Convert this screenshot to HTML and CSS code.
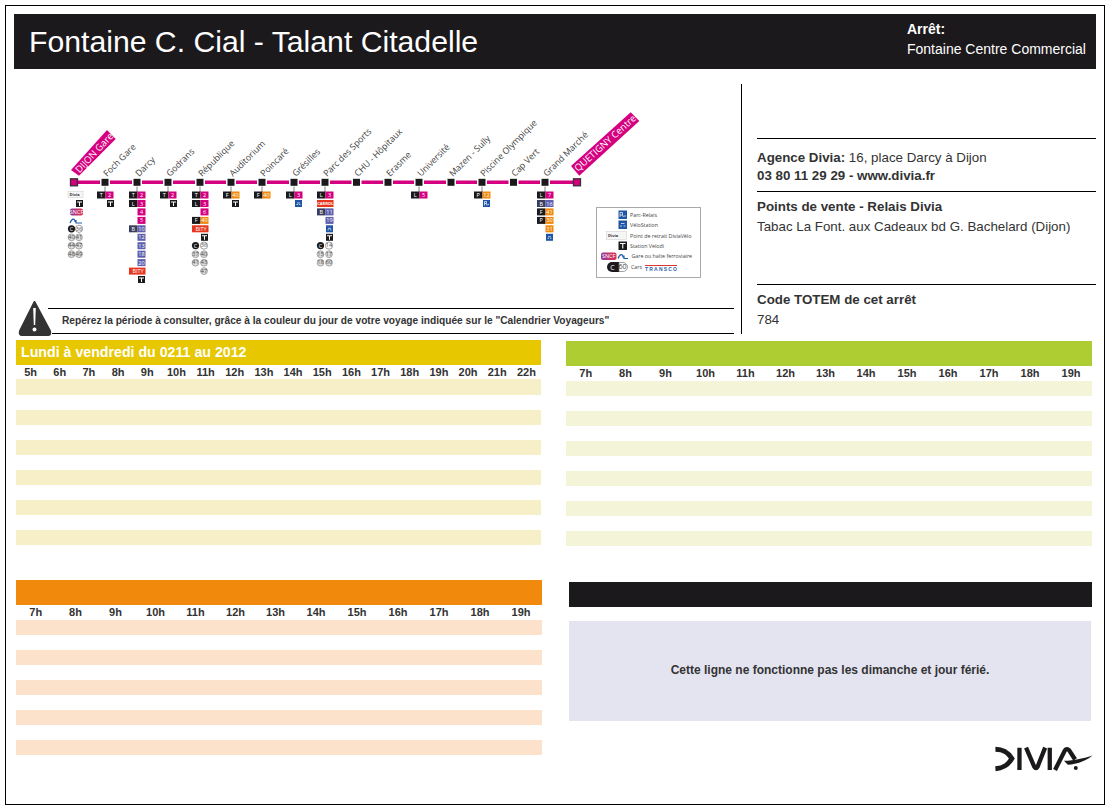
FILE: index.html
```html
<!DOCTYPE html>
<html lang="fr">
<head>
    <meta charset="UTF-8">
    <title>Fontaine C. Cial - Talant Citadelle</title>
    <link rel="stylesheet" href="styles.css">
</head>
<body>
<div class="page">
    <div class="header">
        <h1>Fontaine C. Cial - Talant Citadelle</h1>
        <div class="stop">
            <strong>Arrêt:</strong>
            <span>Fontaine Centre Commercial</span>
        </div>
    </div>

    <div class="top">
        <div class="plan">
            <!-- viewBox is in page coordinates -->
            <svg class="line" viewBox="14 84 727 215" width="727" height="215">
                <defs>
                    <linearGradient id="sncf-fill" x1="0" y1="0" x2="1" y2="0">
                        <stop offset="0" stop-color="#8d3a9c"/>
                        <stop offset="1" stop-color="#e5304f"/>
                    </linearGradient>
                    <g id="node"><rect class="node" x="-4.25" y="178.05" width="8.5" height="8.5"/><path class="tick" d="M0 186.5V192"/></g>
                    <g id="velodi"><rect class="k" width="7" height="7"/><path class="w" d="M1 1.5H6V2.5H4V6H3V2.5H1Z"/></g>
                    <g id="velo"><rect class="c" width="7" height="7"/><path class="thin" d="M1.5 4.5H3M4 4.5H5.5M2 3H5"/></g>
                    <g id="rplus"><rect class="c" width="7" height="7"/><path class="thin" d="M1.5 5.5V1.5H3.5V3.5H1.5M3 3.5L4 5.5M4.5 4.5H6"/></g>
                </defs>

                <path class="track" d="M74 182.3H577"/>
                <use href="#node" x="105"/><use href="#node" x="137"/><use href="#node" x="168"/><use href="#node" x="200"/>
                <use href="#node" x="231"/><use href="#node" x="262"/><use href="#node" x="294"/><use href="#node" x="325"/>
                <use href="#node" x="419"/><use href="#node" x="482"/><use href="#node" x="545"/>
                <rect class="node" x="352.25" y="178.05" width="8.5" height="8.5"/>
                <rect class="node" x="383.75" y="178.05" width="8.5" height="8.5"/>
                <rect class="node" x="446.75" y="178.05" width="8.5" height="8.5"/>
                <rect class="node" x="509.25" y="178.05" width="8.5" height="8.5"/>
                <rect class="end" x="70.5" y="178.8" width="7" height="7"/>
                <rect class="end" x="573.5" y="178.8" width="7" height="7"/>

                <polygon class="flag" points="71,170 107,130 115.7,139 79,175.7"/>
                <text class="flag-text" transform="translate(79.5 173.5) rotate(-47)">DIJON Gare</text>
                <polygon class="flag" points="571,166 630.7,112.3 639.3,121 579.3,175.7"/>
                <text class="flag-text" transform="translate(578 172) rotate(-42)">QUETIGNY Centre</text>

                <text class="name" transform="translate(107 177) rotate(-45)">Foch Gare</text>
                <text class="name" transform="translate(139 177) rotate(-45)">Darcy</text>
                <text class="name" transform="translate(170 177) rotate(-45)">Godrans</text>
                <text class="name" transform="translate(202 177) rotate(-45)">République</text>
                <text class="name" transform="translate(233 177) rotate(-45)">Auditorium</text>
                <text class="name" transform="translate(264 177) rotate(-45)">Poincaré</text>
                <text class="name" transform="translate(296 177) rotate(-45)">Grésilles</text>
                <text class="name" transform="translate(327 177) rotate(-45)">Parc des Sports</text>
                <text class="name" transform="translate(358 177) rotate(-45)">CHU - Hôpitaux</text>
                <text class="name" transform="translate(390 177) rotate(-45)">Erasme</text>
                <text class="name" transform="translate(421 177) rotate(-45)">Université</text>
                <text class="name" transform="translate(453 177) rotate(-45)">Mazen - Sully</text>
                <text class="name" transform="translate(484 177) rotate(-45)">Piscine Olympique</text>
                <text class="name" transform="translate(515 177) rotate(-45)">Cap Vert</text>
                <text class="name" transform="translate(547 177) rotate(-45)">Grand Marché</text>

                <!-- Dijon Gare -->
                <g transform="translate(74 0)">
                    <rect class="pale" x="-6" y="191.5" width="15" height="6"/>
                    <text class="tiny" x="-4.5" y="196">Divia</text>
                    <use href="#velodi" x="2" y="200"/>
                    <rect class="sncf" x="-4" y="208.4" width="13" height="7" rx="2"/>
                    <text class="num" x="2.5" y="213.8">SNCF</text>
                    <path class="ter" d="M-4 223C-2 218 1 218 1 222M2 220V223H8"/>
                    <circle class="k" cx="-2.5" cy="228.8" r="3.6"/><text class="num" x="-2.5" y="230.8">C</text>
                    <circle class="ring" cx="5" cy="228.8" r="3.6"/><text class="num dark" x="5" y="230.6">36</text>
                    <circle class="gray" cx="-2.5" cy="237.3" r="3.4"/><text class="num dark" x="-2.5" y="239">40</text>
                    <circle class="gray" cx="5" cy="237.3" r="3.4"/><text class="num dark" x="5" y="239">41</text>
                    <circle class="gray" cx="-2.5" cy="245.7" r="3.4"/><text class="num dark" x="-2.5" y="247.4">44</text>
                    <circle class="gray" cx="5" cy="245.7" r="3.4"/><text class="num dark" x="5" y="247.4">47</text>
                    <circle class="gray" cx="-2.5" cy="254.2" r="3.4"/><text class="num dark" x="-2.5" y="255.9">48</text>
                    <circle class="gray" cx="5" cy="254.2" r="3.4"/><text class="num dark" x="5" y="255.9">49</text>
                </g>

                <!-- Foch Gare -->
                <g transform="translate(105 0)">
                    <rect class="k" x="-8" y="191.5" width="8.5" height="7"/><text class="num" x="-3.8" y="197">T</text>
                    <rect class="m" x="0.5" y="191.5" width="8" height="7"/><text class="num" x="4.5" y="197">2</text>
                    <use href="#velodi" x="2" y="200"/>
                </g>

                <!-- Darcy -->
                <g transform="translate(137 0)">
                    <rect class="k" x="-8" y="191.5" width="8.5" height="7"/><text class="num" x="-3.8" y="197">T</text>
                    <rect class="m" x="0.5" y="191.5" width="8" height="7"/><text class="num" x="4.5" y="197">2</text>
                    <rect class="k" x="-8" y="200" width="8.5" height="7"/><text class="num" x="-3.8" y="205.5">L</text>
                    <rect class="m" x="0.5" y="200" width="8" height="7"/><text class="num" x="4.5" y="205.5">3</text>
                    <rect class="m" x="0.5" y="208.4" width="8" height="7"/><text class="num" x="4.5" y="213.9">4</text>
                    <rect class="m" x="0.5" y="216.9" width="8" height="7"/><text class="num" x="4.5" y="222.4">5</text>
                    <rect class="n" x="-8" y="225.3" width="8.5" height="7"/><text class="num" x="-3.8" y="230.8">B</text>
                    <rect class="b" x="0.5" y="225.3" width="8" height="7"/><text class="num" x="4.5" y="230.8">10</text>
                    <rect class="b" x="0.5" y="233.8" width="8" height="7"/><text class="num" x="4.5" y="239.3">12</text>
                    <rect class="b" x="0.5" y="242.2" width="8" height="7"/><text class="num" x="4.5" y="247.7">13</text>
                    <rect class="b" x="0.5" y="250.7" width="8" height="7"/><text class="num" x="4.5" y="256.2">18</text>
                    <rect class="b" x="0.5" y="259.1" width="8" height="7"/><text class="num" x="4.5" y="264.6">20</text>
                    <rect class="r" x="-8" y="267.6" width="16.5" height="7"/><text class="num" x="1" y="273.1">BITY</text>
                    <use href="#velodi" x="1" y="276"/>
                </g>

                <!-- Godrans -->
                <g transform="translate(168 0)">
                    <rect class="k" x="-8" y="191.5" width="8.5" height="7"/><text class="num" x="-3.8" y="197">T</text>
                    <rect class="m" x="0.5" y="191.5" width="8" height="7"/><text class="num" x="4.5" y="197">2</text>
                    <use href="#velodi" x="2" y="200"/>
                </g>

                <!-- Republique -->
                <g transform="translate(200 0)">
                    <rect class="k" x="-8" y="191.5" width="8.5" height="7"/><text class="num" x="-3.8" y="197">T</text>
                    <rect class="m" x="0.5" y="191.5" width="8" height="7"/><text class="num" x="4.5" y="197">2</text>
                    <rect class="k" x="-8" y="200" width="8.5" height="7"/><text class="num" x="-3.8" y="205.5">L</text>
                    <rect class="m" x="0.5" y="200" width="8" height="7"/><text class="num" x="4.5" y="205.5">3</text>
                    <rect class="m" x="0.5" y="208.4" width="8" height="7"/><text class="num" x="4.5" y="213.9">6</text>
                    <rect class="k" x="-8" y="216.9" width="8.5" height="7"/><text class="num" x="-3.8" y="222.4">F</text>
                    <rect class="o" x="0.5" y="216.9" width="8" height="7"/><text class="num" x="4.5" y="222.4">40</text>
                    <rect class="r" x="-8" y="225.3" width="16.5" height="7"/><text class="num" x="1" y="230.8">BITY</text>
                    <use href="#velodi" x="1" y="233.8"/>
                    <circle class="k" cx="-4.5" cy="245.6" r="3.6"/><text class="num" x="-4.5" y="247.6">C</text>
                    <circle class="ring" cx="4" cy="245.6" r="3.6"/><text class="num dark" x="4" y="247.4">36</text>
                    <circle class="gray" cx="-4.5" cy="254.2" r="3.4"/><text class="num dark" x="-4.5" y="255.9">37</text>
                    <circle class="gray" cx="4" cy="254.2" r="3.4"/><text class="num dark" x="4" y="255.9">40</text>
                    <circle class="gray" cx="-4.5" cy="262.7" r="3.4"/><text class="num dark" x="-4.5" y="264.4">41</text>
                    <circle class="gray" cx="4" cy="262.7" r="3.4"/><text class="num dark" x="4" y="264.4">43</text>
                    <circle class="gray" cx="4" cy="271.1" r="3.4"/><text class="num dark" x="4" y="272.8">47</text>
                </g>

                <!-- Auditorium -->
                <g transform="translate(231 0)">
                    <rect class="k" x="-8" y="191.5" width="8.5" height="7"/><text class="num" x="-3.8" y="197">F</text>
                    <rect class="o" x="0.5" y="191.5" width="8" height="7"/><text class="num" x="4.5" y="197">40</text>
                    <use href="#velodi" x="1" y="200"/>
                </g>

                <!-- Poincare -->
                <g transform="translate(262 0)">
                    <rect class="k" x="-8" y="191.5" width="8.5" height="7"/><text class="num" x="-3.8" y="197">F</text>
                    <rect class="o" x="0.5" y="191.5" width="8" height="7"/><text class="num" x="4.5" y="197">40</text>
                </g>

                <!-- Gresilles -->
                <g transform="translate(294 0)">
                    <rect class="k" x="-8" y="191.5" width="8.5" height="7"/><text class="num" x="-3.8" y="197">L</text>
                    <rect class="m" x="0.5" y="191.5" width="8" height="7"/><text class="num" x="4.5" y="197">3</text>
                    <use href="#velo" x="1" y="200"/>
                </g>

                <!-- Parc des Sports -->
                <g transform="translate(325 0)">
                    <rect class="k" x="-8" y="191.5" width="8.5" height="7"/><text class="num" x="-3.8" y="197">L</text>
                    <rect class="m" x="0.5" y="191.5" width="8" height="7"/><text class="num" x="4.5" y="197">3</text>
                    <rect class="r" x="-8" y="200" width="16.5" height="7"/><text class="num small" x="0.2" y="205.2">CARROL</text>
                    <rect class="n" x="-8" y="208.4" width="8.5" height="7"/><text class="num" x="-3.8" y="213.9">B</text>
                    <rect class="b" x="0.5" y="208.4" width="8" height="7"/><text class="num" x="4.5" y="213.9">11</text>
                    <rect class="b" x="0.5" y="216.9" width="8" height="7"/><text class="num" x="4.5" y="222.4">19</text>
                    <use href="#velo" x="1" y="225.3"/>
                    <use href="#velodi" x="1" y="233.8"/>
                    <circle class="k" cx="-4.5" cy="245.6" r="3.6"/><text class="num" x="-4.5" y="247.6">C</text>
                    <circle class="ring" cx="4" cy="245.6" r="3.6"/><text class="num dark" x="4" y="247.4">14</text>
                    <circle class="gray" cx="-4.5" cy="254.2" r="3.4"/><text class="num dark" x="-4.5" y="255.9">15</text>
                    <circle class="gray" cx="4" cy="254.2" r="3.4"/><text class="num dark" x="4" y="255.9">17</text>
                    <circle class="gray" cx="-4.5" cy="262.7" r="3.4"/><text class="num dark" x="-4.5" y="264.4">18</text>
                    <circle class="gray" cx="4" cy="262.7" r="3.4"/><text class="num dark" x="4" y="264.4">60</text>
                </g>

                <!-- Universite -->
                <g transform="translate(419 0)">
                    <rect class="k" x="-8" y="191.5" width="8.5" height="7"/><text class="num" x="-3.8" y="197">L</text>
                    <rect class="m" x="0.5" y="191.5" width="8" height="7"/><text class="num" x="4.5" y="197">5</text>
                </g>

                <!-- Piscine Olympique -->
                <g transform="translate(482 0)">
                    <rect class="k" x="-8" y="191.5" width="8.5" height="7"/><text class="num" x="-3.8" y="197">P</text>
                    <rect class="o" x="0.5" y="191.5" width="8" height="7"/><text class="num" x="4.5" y="197">12</text>
                    <use href="#rplus" x="1" y="200"/>
                </g>

                <!-- Grand Marche -->
                <g transform="translate(545 0)">
                    <rect class="k" x="-8" y="191.5" width="8.5" height="7"/><text class="num" x="-3.8" y="197">L</text>
                    <rect class="m" x="0.5" y="191.5" width="8" height="7"/><text class="num" x="4.5" y="197">7</text>
                    <rect class="n" x="-8" y="200" width="8.5" height="7"/><text class="num" x="-3.8" y="205.5">B</text>
                    <rect class="b" x="0.5" y="200" width="8" height="7"/><text class="num" x="4.5" y="205.5">16</text>
                    <rect class="k" x="-8" y="208.4" width="8.5" height="7"/><text class="num" x="-3.8" y="213.9">F</text>
                    <rect class="o" x="0.5" y="208.4" width="8" height="7"/><text class="num" x="4.5" y="213.9">41</text>
                    <rect class="k" x="-8" y="216.9" width="8.5" height="7"/><text class="num" x="-3.8" y="222.4">P</text>
                    <rect class="o" x="0.5" y="216.9" width="8" height="7"/><text class="num" x="4.5" y="222.4">30</text>
                    <rect class="o" x="0.5" y="225.3" width="8" height="7"/><text class="num" x="4.5" y="230.8">31</text>
                    <use href="#velo" x="1" y="233.8"/>
                </g>

                <!-- Legend -->
                <rect class="legend" x="596.5" y="207.5" width="104" height="70"/>
                <rect class="c" x="618.5" y="210.5" width="8.5" height="8.5"/>
                <path class="thin" d="M620 217V212.5H622.5V215H620M622 215L623.5 217M623.5 216H626"/>
                <text class="key" x="630" y="216.8">Parc-Relais</text>
                <rect class="c" x="618.5" y="220.5" width="8.5" height="8.5"/>
                <path class="thin" d="M620 226H622M623.5 226H625.5M621 223.5H624.5"/>
                <text class="key" x="630" y="226.6">VéloStation</text>
                <rect class="pale" x="606.5" y="231.5" width="20" height="8"/>
                <text class="tiny" x="608" y="237">Divia</text>
                <text class="key" x="630" y="237.5">Point de retrait DiviaVélo</text>
                <rect class="k" x="618.5" y="241.5" width="8.5" height="8.5"/>
                <path class="w" d="M620 243H625.5V244H623.3V248.5H622.2V244H620Z"/>
                <text class="key" x="630" y="247.8">Station Velodi</text>
                <rect class="sncf" x="601" y="252.5" width="15.5" height="7.5" rx="2"/>
                <text class="num" x="608.7" y="258.2">SNCF</text>
                <path class="ter" d="M618 258.5C620 253.5 623 253.5 623 257.5M624 255.5V258.5H628"/>
                <text class="key" x="631.5" y="258.3">Gare ou halte ferroviaire</text>
                <path class="k" d="M612 262H619V272H612A5 5 0 0 1 612 262Z"/>
                <text class="num big" x="612.5" y="269.5">C</text>
                <path class="ring" d="M619 262.5H623A4.5 4.5 0 0 1 623 271.5H619Z"/>
                <text class="num big dark" x="622.5" y="269.3">60</text>
                <text class="key" x="631" y="269">Cars</text>
                <path class="transco" d="M645 265H677V266H645Z"/>
                <text class="transco-text" x="645" y="270.5">TRANSCO</text>
            </svg>

            <div class="warn">
                <svg class="warn-icon" viewBox="0 0 37 38" width="37" height="38">
                    <path class="warn-shape" d="M18.5 3L34 32Q35 36 32 36H6Q3 36 4 32Z"/>
                    <path class="warn-mark" d="M17.2 9H19.8L19.2 26H17.8Z"/>
                    <circle class="warn-mark" cx="18.5" cy="30.5" r="2"/>
                </svg>
                <div class="note">
                    <p>Repérez la période à consulter, grâce à la couleur du jour de votre voyage indiquée sur le "Calendrier Voyageurs"</p>
                </div>
            </div>
        </div>

        <div class="info">
            <div class="block agence">
                <b>Agence Divia:</b> 16, place Darcy à Dijon<br>
                <b>03 80 11 29 29 - www.divia.fr</b>
            </div>
            <div class="block points">
                <b>Points de vente - Relais Divia</b><br>
                Tabac La Font. aux Cadeaux bd G. Bachelard (Dijon)
            </div>
            <div class="block">
                <b>Code TOTEM de cet arrêt</b><br>
                784
            </div>
        </div>
    </div>

    <div class="timetables">
        <div class="panel jaune">
            <div class="head">Lundi à vendredi du 0211 au 2012</div>
            <div class="hours">
                <span>5h</span><span>6h</span><span>7h</span><span>8h</span><span>9h</span><span>10h</span>
                <span>11h</span><span>12h</span><span>13h</span><span>14h</span><span>15h</span><span>16h</span>
                <span>17h</span><span>18h</span><span>19h</span><span>20h</span><span>21h</span><span>22h</span>
            </div>
            <div class="band"></div><div class="band"></div><div class="band"></div>
            <div class="band"></div><div class="band"></div><div class="band"></div>
        </div>

        <div class="panel vert">
            <div class="head"></div>
            <div class="hours">
                <span>7h</span><span>8h</span><span>9h</span><span>10h</span><span>11h</span><span>12h</span><span>13h</span>
                <span>14h</span><span>15h</span><span>16h</span><span>17h</span><span>18h</span><span>19h</span>
            </div>
            <div class="band"></div><div class="band"></div><div class="band"></div>
            <div class="band"></div><div class="band"></div><div class="band"></div>
        </div>

        <div class="panel orange">
            <div class="head"></div>
            <div class="hours">
                <span>7h</span><span>8h</span><span>9h</span><span>10h</span><span>11h</span><span>12h</span><span>13h</span>
                <span>14h</span><span>15h</span><span>16h</span><span>17h</span><span>18h</span><span>19h</span>
            </div>
            <div class="band"></div><div class="band"></div><div class="band"></div>
            <div class="band"></div><div class="band"></div>
        </div>

        <div class="panel noir">
            <div class="head"></div>
            <div class="closed">Cette ligne ne fonctionne pas les dimanche et jour férié.</div>
            <svg class="logo" viewBox="105 40 305 82" width="102" height="27">
                <path class="logo-s" d="M110 53C138 53 150 66 160 81C150 98 138 110 110 112"/>
                <path class="logo-s thinner" d="M183 48V116M203 48L228 106Q233 115 238 106L261 48M275 48V116"/>
                <path class="logo-s thinner" d="M291 116L320 58Q326 48 334 56L352 84"/>
                <path class="logo-f" d="M318 88C350 88 380 80 405 72C385 88 360 98 330 100Z"/>
                <circle class="logo-f" cx="354" cy="110" r="6"/>
            </svg>
        </div>
    </div>
</div>
</body>
</html>
```

FILE: styles.css
```css
body {
    margin: 0;
    background: white;
    font-family: "Liberation Sans", Arial, sans-serif;
    color: #333;
}
.page {
    box-sizing: border-box;
    width: 1100px;
    height: 800px;
    margin: 5px;
    padding: 8px;
    border: 1px solid black;
}

/* header */
.header {
    display: flex;
    justify-content: space-between;
    height: 55px;
    background: #1b191c;
    color: white;
}
.header h1 {
    margin: 0 0 0 15px;
    font-size: 30.2px;
    font-weight: normal;
    line-height: 56px;
}
.stop {
    display: flex;
    flex-direction: column;
    width: 189px;
    padding-top: 5px;
    font-size: 14px;
    line-height: 20px;
}

/* line plan and contacts */
.top {
    display: flex;
    height: 250px;
    margin-top: 15px;
}
.plan {
    box-sizing: border-box;
    flex: none;
    width: 728px;
    border-right: 1px solid black;
}
.line {
    display: block;
}
.track {
    fill: none;
    stroke: #d5007f;
    stroke-width: 3.4;
}
.node {
    fill: #1b191c;
    stroke: white;
    stroke-width: 1.5;
}
.tick {
    stroke: #666;
    stroke-width: 0.8;
}
.end {
    fill: #d5007f;
    stroke: #333;
    stroke-width: 1.3;
}
.flag {
    fill: #d5007f;
}
.flag-text {
    fill: white;
    font-family: "Open Sans", sans-serif;
    font-size: 9.5px;
}
.name {
    fill: #444;
    font-family: "Open Sans", sans-serif;
    font-size: 8.8px;
}
.num {
    fill: white;
    font-family: "Open Sans", sans-serif;
    font-size: 5.5px;
    text-anchor: middle;
}
.num.big {
    font-size: 7px;
}
.num.small {
    font-size: 4px;
    font-weight: bold;
}
.dark {
    fill: #444;
}
.tiny {
    fill: #333;
    font-family: "Open Sans", sans-serif;
    font-size: 4px;
    font-weight: bold;
}
.key {
    fill: #444;
    font-family: "Open Sans", sans-serif;
    font-size: 5.3px;
}
.k { fill: #1b191c; }
.n { fill: #3c3c5c; }
.m { fill: #d5007f; }
.o { fill: #f0890c; }
.b { fill: #5d5fae; }
.c { fill: #1f55a5; }
.r { fill: #e8351e; }
.w { fill: white; }
.thin {
    fill: none;
    stroke: white;
    stroke-width: 0.7;
}
.pale {
    fill: #f6f6f6;
    stroke: #ccc;
    stroke-width: 0.5;
}
.sncf {
    fill: url(#sncf-fill);
}
.ter {
    fill: none;
    stroke: #1d5aa8;
    stroke-width: 1.2;
}
.ring {
    fill: white;
    stroke: #777;
    stroke-width: 0.7;
}
.gray {
    fill: #ddd;
    stroke: #888;
    stroke-width: 0.7;
}
.legend {
    fill: white;
    stroke: #aaa;
    stroke-width: 1;
}
.transco {
    fill: #d33;
}
.transco-text {
    fill: #2a62ac;
    font-family: "Liberation Sans", sans-serif;
    font-size: 5px;
    font-weight: bold;
    letter-spacing: 1.2px;
}

/* warning strip */
.warn {
    display: flex;
    height: 35px;
}
.warn-icon {
    flex: none;
    margin-left: 2px;
}
.warn-shape {
    fill: #333;
    stroke: #333;
    stroke-width: 2;
    stroke-linejoin: round;
}
.warn-mark {
    fill: white;
}
.note {
    flex: 1;
    height: 25px;
    margin: 9px 7px 0 -5px;
    border-top: 1px solid black;
}
.note p {
    height: 24px;
    margin: 0 0 0 4px;
    padding-left: 10px;
    border-bottom: 1px solid black;
    font-size: 10.17px;
    font-weight: bold;
    line-height: 24px;
    white-space: nowrap;
}

.info {
    flex: 1;
    padding: 54px 0 0 15px;
    font-size: 13.33px;
    line-height: 20px;
}
.block {
    border-top: 1px solid black;
    padding-top: 5px;
}
.agence {
    height: 42px;
    padding-top: 10px;
    line-height: 18px;
}
.points {
    height: 87px;
}

/* timetables */
.timetables {
    display: grid;
    grid-template-columns: 526px 526px;
    grid-template-rows: 240px 1fr;
    column-gap: 24px;
    margin: 6px 4px 0 2px;
}
.head {
    box-sizing: border-box;
    height: 25px;
    padding-left: 5px;
    color: white;
    font-size: 14.2px;
    font-weight: bold;
    line-height: 25px;
}
.hours {
    display: grid;
    grid-template-columns: 39.5px repeat(6, 40px) repeat(6, 41px);
    height: 15px;
    font-size: 11px;
    font-weight: bold;
    line-height: 15px;
    text-align: center;
}
.band {
    height: 15px;
    margin-bottom: 15px;
}

.jaune {
    margin-right: 1px;
}
.jaune .head { background: #e6c700; }
.jaune .hours {
    grid-template-columns: repeat(18, 1fr);
    height: 14px;
    line-height: 14px;
}
.jaune .band { background: #f7efc8; }
.jaune .band:nth-child(3) { height: 16px; }

.vert {
    margin-top: 1px;
}
.vert .head { background: #aecd33; }
.vert .band { background: #f3f4d8; }

.orange .head { background: #f0890c; }
.orange .band { background: #fde2cb; }

.noir {
    margin: 2px 0 0 3px;
}
.noir .head { background: #1b191c; }
.closed {
    width: 522px;
    height: 100px;
    margin-top: 14px;
    background: #e4e4f1;
    font-size: 12px;
    font-weight: bold;
    line-height: 98px;
    text-align: center;
}
.logo {
    display: block;
    margin: 24px -3px 0 auto;
}
.logo-s {
    fill: none;
    stroke: #1b191c;
    stroke-width: 15;
}
.logo-s.thinner {
    stroke-width: 13;
}
.logo-f {
    fill: #1b191c;
}
```
